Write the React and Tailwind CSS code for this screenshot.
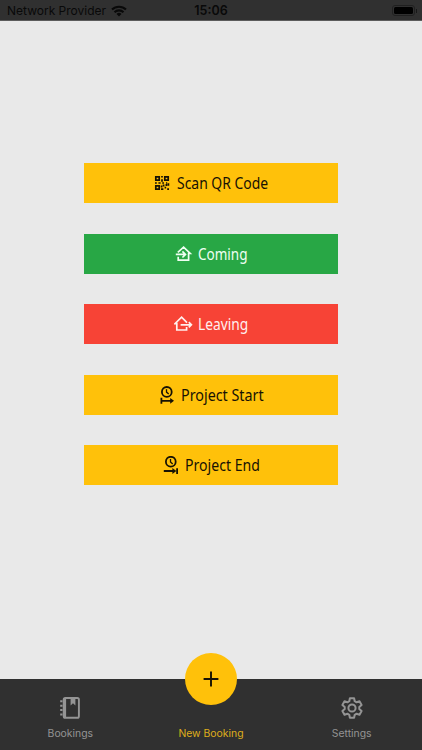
import React from 'react';

const QrIcon = () => (
  <svg width="16" height="16" viewBox="0 0 16 16" fill="none" stroke="currentColor" strokeWidth="1.7">
    <path d="M1.8 1.8h3.4v3.4H1.8zM10.8 1.8h3.4v3.4h-3.4zM1.8 10.8h3.4v3.4H1.8z" />
    <path d="M8 1v1.6M8 4.2v2.6M1 8h1.8M4.4 8h2.2M8.2 8H10M12 8h1.2M9.6 9.6v2M12.4 9v2M14.4 8.2v2.6M7.6 10.6v1.8M7 14.2h2.4M10.6 12.6h1.6M13.2 14.2H15" />
  </svg>
);

const ComingIcon = () => (
  <svg width="18" height="18" viewBox="0 0 18 18" fill="none" stroke="currentColor" strokeWidth="1.7">
    <path d="M2.8 7.3 8.6 2.2l6.6 6.3h-1.6v6.7H3.2v-3.4" />
    <path d="M.8 9.4h9.4M7.4 6.3l3.1 3.1-3.1 3.1" />
  </svg>
);

const LeavingIcon = () => (
  <svg width="19" height="18" viewBox="0 0 19 18" fill="none" stroke="currentColor" strokeWidth="1.7">
    <path d="M13 7.6 7.6 2.2.9 8.7h1.9v6.3h9.8v-3" />
    <path d="M6.6 9.8h10.6M14.8 7.2l2.6 2.6-2.6 2.6" />
  </svg>
);

const ProjectStartIcon = () => (
  <svg width="16" height="18" viewBox="0 0 16 18" fill="none" stroke="currentColor" strokeWidth="1.8">
    <circle cx="7.8" cy="5.9" r="4.9" />
    <path d="M7.5 3.2v2.9l2.2 2" strokeWidth="1.3" />
    <path d="M2.4 11.8v6M2.4 14.8H13" />
    <path d="m11.2 11.9 3.8 2.9-3.8 2.9z" fill="currentColor" stroke="none" />
  </svg>
);

const ProjectEndIcon = () => (
  <svg width="16" height="18" viewBox="0 0 16 18" fill="none" stroke="currentColor" strokeWidth="1.8">
    <circle cx="7.8" cy="5.7" r="4.9" />
    <path d="M7.5 3v2.9l2.2 2" strokeWidth="1.3" />
    <path d="M.8 15H11M14.1 12.2V18" />
    <path d="m9.4 12.1 3.9 2.9-3.9 2.9z" fill="currentColor" stroke="none" />
  </svg>
);

const BookIcon = () => (
  <svg width="22" height="24" viewBox="0 0 22 24" fill="none" stroke="currentColor" strokeWidth="1.9">
    <rect x="4.7" y="2" width="15.2" height="19.8" rx="1.6" />
    <path d="M5.8 2v19.8" strokeWidth="2.6" />
    <path d="M11.6 2.2h4.8v7.4L14 7.3l-2.4 2.3z" fill="currentColor" stroke="none" />
    <path d="M1.2 5.3h4M1.2 9.7h4M1.2 14.1h4M1.2 18.5h4" strokeWidth="2" strokeDasharray="1.8 .5" />
  </svg>
);

const GearIcon = () => (
  <svg width="24" height="24" viewBox="0 0 24 24" fill="none" stroke="currentColor" strokeWidth="2" strokeLinejoin="round">
    <path d="M9.9 2.2h4.2l.6 3 1.9 1.1 2.9-1 2.1 3.7-2.3 2v2l2.3 2-2.1 3.7-2.9-1-1.9 1.1-.6 3H9.9l-.6-3-1.9-1.1-2.9 1L2.4 15l2.3-2v-2l-2.3-2 2.1-3.7 2.9 1 1.9-1.1z" />
    <circle cx="12" cy="12" r="3.6" />
  </svg>
);

const WifiIcon = () => (
  <svg width="16" height="12" viewBox="0 0 16 12" fill="none" stroke="currentColor" strokeWidth="2.1">
    <path d="M1 4.6a10 10 0 0 1 14 0M3.5 7.2a6.4 6.4 0 0 1 9 0" />
    <path d="M8 11.6 5.5 9.1a3.5 3.5 0 0 1 5 0z" fill="currentColor" stroke="none" />
  </svg>
);

const actions = [
  { label: 'Scan QR Code', Icon: QrIcon, color: 'bg-[#ffc10a] text-[#171204]', pad: 'pl-[70px] gap-[7px]', scale: 'scale-x-[0.87]' },
  { label: 'Coming', Icon: ComingIcon, color: 'bg-[#28a745] text-[#effff2]', pad: 'pl-[91px] gap-[5px]', scale: 'scale-x-[0.845]' },
  { label: 'Leaving', Icon: LeavingIcon, color: 'bg-[#f74336] text-[#fff0ee]', pad: 'pl-[90px] gap-[4.5px]', scale: 'scale-x-[0.86]' },
  { label: 'Project Start', Icon: ProjectStartIcon, color: 'bg-[#ffc10a] text-[#171204]', pad: 'pl-[75px] gap-[6px]', scale: 'scale-x-[0.895]' },
  { label: 'Project End', Icon: ProjectEndIcon, color: 'bg-[#ffc10a] text-[#171204]', pad: 'pl-[79px] gap-[6px]', scale: 'scale-x-[0.88]' },
];

const ActionButton = ({ label, Icon, color, pad, scale }) => (
  <button className={`flex h-10 w-[254px] items-center ${color} ${pad}`}>
    <Icon />
    <span className={`origin-left whitespace-nowrap font-['Noto_Sans',sans-serif] text-[16px] leading-5 ${scale}`}>{label}</span>
  </button>
);

const StatusBar = () => (
  <header className="grid h-[21px] grid-cols-3 items-center border-b border-[#5c5c5c] bg-[#303030] pt-[2px] text-[#090909]">
    <div className="flex items-center gap-[5px] pl-[7px] text-[12px] whitespace-nowrap">
      <span>Network Provider</span>
      <WifiIcon />
    </div>
    <span className="text-center text-[12.5px] font-semibold">15:06</span>
    <div className="flex items-center justify-end gap-px pr-[5px] pb-px">
      <div className="h-[11px] w-[23px] rounded-[3px] border border-[#202020] p-px">
        <div className="h-full rounded-[1.5px] bg-black" />
      </div>
      <div className="h-1 w-px bg-[#181818]" />
    </div>
  </header>
);

const TabBar = () => (
  <nav className="relative grid h-[71px] grid-cols-3 bg-[#303030] pt-[17px] text-[10.4px] leading-4 text-[#949494]">
    <button className="flex flex-col items-center gap-[6px]">
      <BookIcon />
      <span>Bookings</span>
    </button>
    <button className="flex flex-col items-center justify-start pt-[30px] text-[#dfae1b]">
      <span>New Booking</span>
    </button>
    <button className="flex flex-col items-center gap-[6px]">
      <GearIcon />
      <span>Settings</span>
    </button>
    <div className="absolute -top-[26px] left-[185px] flex size-[52px] items-center justify-center rounded-full bg-[#ffc10a] text-[#171204]">
      <svg width="16" height="16" viewBox="0 0 16 16" stroke="currentColor" strokeWidth="1.9">
        <path d="M8 .6v14.8M.6 8h14.8" />
      </svg>
    </div>
  </nav>
);

const App = () => {
  return (
    <div className="flex h-[750px] w-[422px] flex-col overflow-hidden bg-[#e9e9e9] font-['Inter',sans-serif]">
      <StatusBar />
      <main className="flex flex-1 flex-col items-center gap-[30.6px] pt-[142px]">
        {actions.map((action) => (
          <ActionButton key={action.label} {...action} />
        ))}
      </main>
      <TabBar />
    </div>
  );
};

export default App;
